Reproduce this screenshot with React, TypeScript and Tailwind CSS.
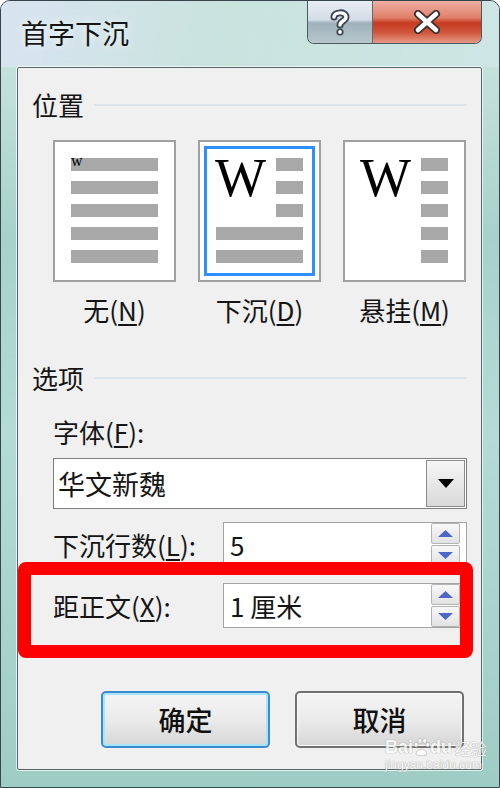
import React from "react";

const CJK = "font-['Noto_Sans_CJK_SC',sans-serif]";

function Bars({ n, narrow }: { n: number; narrow?: boolean }) {
  return (
    <div className={`flex flex-col gap-[10px] ${narrow ? "w-[27px]" : "w-full"}`}>
      {Array.from({ length: n }).map((_, i) => (
        <div key={i} className="h-[13px] bg-[#a8a8a8]" />
      ))}
    </div>
  );
}

function BigW() {
  return (
    <span className="-mt-[7px] -ml-[1px] font-['Liberation_Serif',serif] text-[54px] leading-none text-black">
      W
    </span>
  );
}

function PreviewBox({ selected, children }: { selected?: boolean; children: React.ReactNode }) {
  return (
    <div className="relative h-[142px] w-[123px] border-2 border-[#a0a0a0] bg-white px-[16px] pt-[16px]">
      {selected && <div className="pointer-events-none absolute inset-[4px] border-[3px] border-[#2f8fff]" />}
      {children}
    </div>
  );
}

function Section({ title }: { title: string }) {
  return (
    <div className="flex h-[30px] items-center gap-[10px]">
      <span className="text-[26px] leading-none">{title}</span>
      <div className="h-[2px] flex-1 bg-[#dde5ec]" />
    </div>
  );
}

function Arrow({ up }: { up?: boolean }) {
  return (
    <svg width="15" height="7" viewBox="0 0 15 7">
      <path d={up ? "M7.5 0 L15 7 L0 7 Z" : "M0 0 L15 0 L7.5 7 Z"} fill="#4e66c4" />
    </svg>
  );
}

function Spinner() {
  return (
    <div className="flex w-[29px] flex-col gap-[1px]">
      <div className="flex h-[21px] items-center justify-center rounded-[2px] border border-[#b4b4b4] bg-linear-to-b from-[#f8f8f8] to-[#e2e2e2]">
        <Arrow up />
      </div>
      <div className="flex h-[21px] items-center justify-center rounded-[2px] border border-[#b4b4b4] bg-linear-to-b from-[#f8f8f8] to-[#e2e2e2]">
        <Arrow />
      </div>
    </div>
  );
}

function SpinRow({ label, acc, value }: { label: string; acc: string; value: string }) {
  return (
    <div className="flex items-center">
      <span className="text-[26px] leading-none">
        {label}(<span className="underline underline-offset-[3px]">{acc}</span>):
      </span>
      <div className="ml-auto flex h-[45px] w-[244px] items-center border border-[#a3a3a3] bg-white py-[1px] pr-[6px]">
        <span className="flex-1 pl-[6px] text-[26px] leading-none">{value}</span>
        <Spinner />
      </div>
    </div>
  );
}

function DlgButton({ label, focused }: { label: string; focused?: boolean }) {
  return (
    <div
      className={`flex h-[57px] w-[169px] items-center justify-center rounded-[5px] border-2 bg-linear-to-b from-[#f4f4f4] via-[#ebebeb] to-[#d6d6d6] ${
        focused ? "border-[#3a8ccc] shadow-[inset_0_0_0_2px_#a8e4fb]" : "border-[#707070] shadow-[inset_0_0_0_1px_#fbfbfb]"
      }`}
    >
      <span className="text-[27px] font-medium leading-none text-[#111]">{label}</span>
    </div>
  );
}

export default function App() {
  return (
    <div
      className={`relative h-[788px] w-[500px] overflow-hidden rounded-t-[10px] border border-[#36464a] bg-[linear-gradient(180deg,#d4e2ef_0%,#c4e1da_9%,#a6d2cb_30%,#b4dbd5_55%,#9ecdc6_100%)] text-[#151515] ${CJK}`}
    >
      {/* Title bar */}
      <div className="flex h-[66px] items-start justify-between bg-[linear-gradient(100deg,#d8e4f1_0%,#c9e3dd_45%,#cde5e4_100%)]">
        <div className="pl-[20px] pt-[18px] text-[27px] leading-none [text-shadow:0_0_8px_rgba(255,255,255,0.95)]">
          首字下沉
        </div>
        <div className="mr-[17px] flex h-[43px] overflow-hidden rounded-b-[7px] border border-t-0 border-[#4b5a62]">
          <div className="flex w-[65px] items-center justify-center border-r border-[#5a6b72] bg-[linear-gradient(180deg,#e9eef4_0%,#d3dde6_45%,#9fb2ba_52%,#b6c8cc_100%)]">
            <svg width="22" height="28" viewBox="0 0 22 28">
              <path
                d="M5 9 C5 4 17 3 17 9 C17 13 11 13 11 17"
                fill="none"
                stroke="#3a4450"
                strokeWidth="7"
                strokeLinecap="round"
              />
              <circle cx="11" cy="24" r="3.6" fill="#3a4450" />
              <path
                d="M5 9 C5 4 17 3 17 9 C17 13 11 13 11 17"
                fill="none"
                stroke="#ffffff"
                strokeWidth="3.4"
                strokeLinecap="round"
              />
              <circle cx="11" cy="24" r="1.9" fill="#ffffff" />
            </svg>
          </div>
          <div className="flex w-[108px] items-center justify-center bg-[linear-gradient(180deg,#eeb0a2_0%,#e07f6a_40%,#c63a22_52%,#d0563c_75%,#e69a86_100%)]">
            <svg width="30" height="24" viewBox="0 0 30 24">
              <path d="M6 4 L24 20 M24 4 L6 20" stroke="#3b3030" strokeWidth="8" strokeLinecap="round" />
              <path d="M6 4 L24 20 M24 4 L6 20" stroke="#ffffff" strokeWidth="4.5" strokeLinecap="round" />
            </svg>
          </div>
        </div>
      </div>

      {/* Client area */}
      <div className="ml-[16px] mr-[17px] h-[703px] rounded-[2px] border border-[#55666b] bg-[#f0f0f0] pl-[14px] pr-[14px] shadow-[0_0_0_1px_rgba(255,255,255,0.7)]">
        <div className="mt-[22px]">
          <Section title="位置" />
        </div>

        <div className="ml-[21px] mt-[20px] flex gap-[22px]">
          <PreviewBox>
            <div className="flex flex-col gap-[10px]">
              <div className="relative h-[13px] bg-[#a8a8a8]">
                <span className="absolute -top-[5px] left-0 font-['Liberation_Serif',serif] text-[16px] leading-none text-black">
                  w
                </span>
              </div>
              <Bars n={4} />
            </div>
          </PreviewBox>
          <PreviewBox selected>
            <div className="flex flex-col gap-[10px]">
              <div className="flex justify-between">
                <BigW />
                <Bars n={3} narrow />
              </div>
              <Bars n={2} />
            </div>
          </PreviewBox>
          <PreviewBox>
            <div className="flex justify-between">
              <BigW />
              <Bars n={5} narrow />
            </div>
          </PreviewBox>
        </div>

        <div className="ml-[21px] mt-[12px] flex gap-[22px]">
          <div className="h-[32px] w-[123px] text-center text-[26px] leading-[32px]">
            无(<span className="underline underline-offset-[3px]">N</span>)
          </div>
          <div className="h-[32px] w-[123px] text-center text-[26px] leading-[32px]">
            下沉(<span className="underline underline-offset-[3px]">D</span>)
          </div>
          <div className="h-[32px] w-[123px] text-center text-[26px] leading-[32px]">
            悬挂(<span className="underline underline-offset-[3px]">M</span>)
          </div>
        </div>

        <div className="mt-[37px]">
          <Section title="选项" />
        </div>

        <div className="ml-[21px]">
          <div className="mt-[24px] flex h-[30px] items-center text-[26px] leading-none">
            字体(<span className="underline underline-offset-[3px]">F</span>):
          </div>

          <div className="mt-[11px] flex h-[51px] items-center border border-[#7e7e7e] bg-white py-[1px] pr-[1px]">
            <span className="flex-1 pl-[4px] text-[27px] leading-none">华文新魏</span>
            <div className="flex h-full w-[39px] items-center justify-center border border-[#8c8c8c] bg-linear-to-b from-[#f6f6f6] to-[#d9d9d9]">
              <svg width="16" height="9" viewBox="0 0 16 9">
                <path d="M0 0 L16 0 L8 9 Z" fill="#000" />
              </svg>
            </div>
          </div>

          <div className="mt-[13px]">
            <SpinRow label="下沉行数" acc="L" value="5" />
          </div>
          <div className="mt-[16px]">
            <SpinRow label="距正文" acc="X" value="1 厘米" />
          </div>

          <div className="mr-[3px] mt-[63px] flex justify-end gap-[25px]">
            <DlgButton label="确定" focused />
            <DlgButton label="取消" />
          </div>
        </div>
      </div>

      {/* Red annotation box */}
      <div className="pointer-events-none absolute left-[17px] top-[561px] h-[96px] w-[455px] rounded-[8px] border-[13px] border-[#ff0000]" />

      {/* Watermark */}
      <div className="pointer-events-none absolute left-[384px] top-[736px] flex w-[100px] flex-col items-start whitespace-nowrap text-white opacity-80 [text-shadow:0_0_1px_#9a9a9a,0_0_1px_#9a9a9a]">
        <div className="flex items-end font-['Liberation_Sans',sans-serif] text-[18px] font-bold leading-none">
          <span>Bai</span>
          <svg width="17" height="20" viewBox="0 0 22 24" className="-mb-[1px]">
            <g fill="#ffffff" stroke="#a0a0a0" strokeWidth="0.8">
              <ellipse cx="4" cy="9" rx="2.6" ry="3.2" />
              <ellipse cx="9" cy="4" rx="2.6" ry="3.2" />
              <ellipse cx="15" cy="4" rx="2.6" ry="3.2" />
              <ellipse cx="19" cy="9" rx="2.4" ry="3" />
              <path d="M4 21 C4 13 18 13 18 21 C18 24 4 24 4 21 Z" />
            </g>
          </svg>
          <span>du</span>
          <span className={`ml-[3px] text-[16px] font-normal ${CJK}`}>经验</span>
        </div>
        <div className="mt-[3px] font-['Liberation_Sans',sans-serif] text-[12px] leading-none">jingyan.baidu.com</div>
      </div>
    </div>
  );
}
